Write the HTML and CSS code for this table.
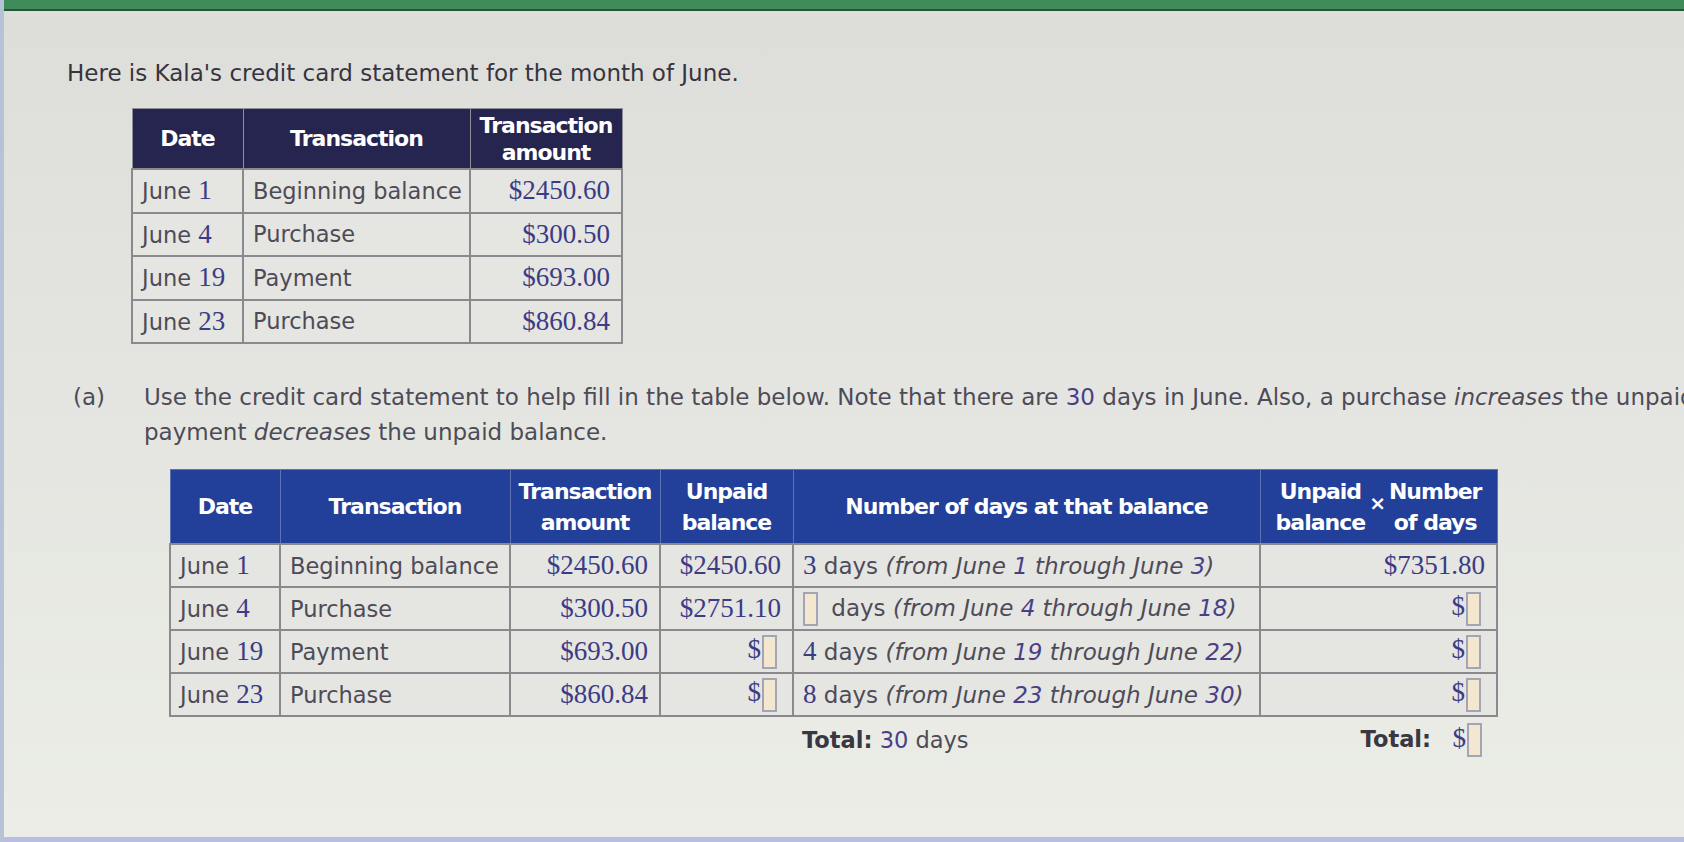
FILE: index.html
```html
<!DOCTYPE html>
<html lang="en">
<head>
<meta charset="utf-8">
<title>Credit card statement</title>
<link rel="stylesheet" href="styles.css">
</head>
<body>
<div class="topbar"></div>
<main class="content">
  <p class="intro">Here is Kala's credit card statement for the month of June.</p>

  <table class="tbl tbl-statement">
    <colgroup><col class="c111"><col class="c227"><col class="c152"></colgroup>
    <thead>
      <tr><th>Date</th><th>Transaction</th><th>Transaction<br>amount</th></tr>
    </thead>
    <tbody>
      <tr><td>June <span class="num">1</span></td><td>Beginning balance</td><td class="r"><span class="num">$2450.60</span></td></tr>
      <tr><td>June <span class="num">4</span></td><td>Purchase</td><td class="r"><span class="num">$300.50</span></td></tr>
      <tr><td>June <span class="num">19</span></td><td>Payment</td><td class="r"><span class="num">$693.00</span></td></tr>
      <tr><td>June <span class="num">23</span></td><td>Purchase</td><td class="r"><span class="num">$860.84</span></td></tr>
    </tbody>
  </table>

  <div class="part">
    <span class="label">(a)</span>
    <div class="part-text">
      <span class="line">Use the credit card statement to help fill in the table below. Note that there are <span class="hl">30</span> days in June. Also, a purchase <em>increases</em> the unpaid balance, and a</span>
      <span class="line">payment <em>decreases</em> the unpaid balance.</span>
    </div>
  </div>

  <table class="tbl tbl-work">
    <colgroup><col class="c110"><col class="c230"><col class="c150"><col class="c133"><col class="c467"><col class="c237"></colgroup>
    <thead>
      <tr>
        <th>Date</th>
        <th>Transaction</th>
        <th>Transaction<br>amount</th>
        <th>Unpaid<br>balance</th>
        <th>Number of days at that balance</th>
        <th>
          <div class="product">
            <span class="stack">Unpaid<br>balance</span>
            <span class="times">×</span>
            <span class="stack">Number<br>of days</span>
          </div>
        </th>
      </tr>
    </thead>
    <tbody>
      <tr>
        <td>June <span class="num">1</span></td>
        <td>Beginning balance</td>
        <td class="r"><span class="num">$2450.60</span></td>
        <td class="r"><span class="num">$2450.60</span></td>
        <td class="days"><span class="num">3</span> days <em>(from June <span class="hl">1</span> through June <span class="hl">3</span>)</em></td>
        <td class="r"><span class="num">$7351.80</span></td>
      </tr>
      <tr>
        <td>June <span class="num">4</span></td>
        <td>Purchase</td>
        <td class="r"><span class="num">$300.50</span></td>
        <td class="r"><span class="num">$2751.10</span></td>
        <td class="days"><span class="box box-first"></span> days <em>(from June <span class="hl">4</span> through June <span class="hl">18</span>)</em></td>
        <td class="r"><span class="num">$</span><span class="box"></span></td>
      </tr>
      <tr>
        <td>June <span class="num">19</span></td>
        <td>Payment</td>
        <td class="r"><span class="num">$693.00</span></td>
        <td class="r"><span class="num">$</span><span class="box"></span></td>
        <td class="days"><span class="num">4</span> days <em>(from June <span class="hl">19</span> through June <span class="hl">22</span>)</em></td>
        <td class="r"><span class="num">$</span><span class="box"></span></td>
      </tr>
      <tr>
        <td>June <span class="num">23</span></td>
        <td>Purchase</td>
        <td class="r"><span class="num">$860.84</span></td>
        <td class="r"><span class="num">$</span><span class="box"></span></td>
        <td class="days"><span class="num">8</span> days <em>(from June <span class="hl">23</span> through June <span class="hl">30</span>)</em></td>
        <td class="r"><span class="num">$</span><span class="box"></span></td>
      </tr>
      <tr class="totals">
        <td colspan="4"></td>
        <td><strong>Total:</strong> <span class="hl">30</span> days</td>
        <td class="r"><strong>Total:</strong>&nbsp;&nbsp; <span class="num">$</span><span class="box"></span></td>
      </tr>
    </tbody>
  </table>
</main>
<div class="bottombar"></div>
</body>
</html>
```

FILE: styles.css
```css
html, body {
  margin: 0;
  padding: 0;
}

body {
  width: 1684px;
  height: 842px;
  overflow: hidden;
  display: flex;
  flex-direction: column;
  box-sizing: border-box;
  border-left: 4px solid #b7c2d6;
  background: linear-gradient(180deg, #dddeda 0%, #e4e5e0 45%, #ebede6 100%);
  font-family: "DejaVu Sans", Verdana, sans-serif;
  font-size: 23px;
  color: #4e4b58;
}

.topbar {
  height: 9px;
  background: #3f8b59;
  border-bottom: 2px solid #24573a;
  flex: none;
}

.content {
  flex: 1;
  padding-left: 63px;
}

.intro {
  margin: 48px 0 0;
  line-height: 28px;
  color: #37333f;
}

.tbl {
  border-collapse: collapse;
  table-layout: fixed;
}

.tbl th {
  color: #ffffff;
  font-weight: bold;
  font-size: 22px;
  letter-spacing: -1px;
  text-align: center;
  line-height: 27px;
  padding: 0 4px;
  border: 1px solid #8f8f98;
}

.tbl td {
  background: #e5e5e1;
  border: 2px solid #8a8a8e;
  padding: 0 11px 0 9px;
  height: 41px;
  font-size: 22.5px;
  white-space: nowrap;
  vertical-align: middle;
}

.tbl td.r {
  text-align: right;
}

.tbl td.days {
  font-size: 23px;
}

.tbl-statement {
  margin: 21px 0 0 64px;
  width: 490px;
}

.tbl-statement th {
  background: #25254f;
  height: 59px;
}

.tbl-statement td {
  height: 41.5px;
}

.tbl-work {
  margin: 19px 0 0 102px;
  width: 1327px;
}

.tbl-work th {
  background: #22409a;
  height: 73px;
  line-height: 31px;
  border-color: #5c72b4;
}

.c111 { width: 111px; }
.c227 { width: 227px; }
.c152 { width: 152px; }
.c110 { width: 110px; }
.c230 { width: 230px; }
.c150 { width: 150px; }
.c133 { width: 133px; }
.c467 { width: 467px; }
.c237 { width: 237px; }

.num {
  font-family: "Liberation Serif", "Times New Roman", serif;
  font-size: 27px;
  color: #3b3b86;
}

.hl {
  color: #4a3f86;
}

em {
  font-style: italic;
}

.part {
  display: flex;
  margin: 36px 0 0 6px;
  line-height: 35px;
}

.label {
  width: 71px;
  flex: none;
}

.part-text {
  display: flex;
  flex-direction: column;
  white-space: nowrap;
}

.line {
  display: block;
}

.product {
  display: flex;
  align-items: center;
  justify-content: center;
  gap: 4px;
}

.stack {
  display: block;
}

.times {
  font-size: 20px;
  margin-top: -6px;
}

.box {
  display: inline-block;
  width: 11px;
  height: 30px;
  background: #f3e7cf;
  border: 2px solid #a3a4b6;
  vertical-align: middle;
  margin: 0 4px 0 1px;
}

.box-first {
  margin: 0 6px 0 0;
}

.totals td {
  background: transparent;
  border: none;
  height: 46px;
  color: #4e4b58;
}

.totals strong {
  color: #3a3742;
}

.bottombar {
  height: 5px;
  background: #b9bde2;
  flex: none;
}
```
